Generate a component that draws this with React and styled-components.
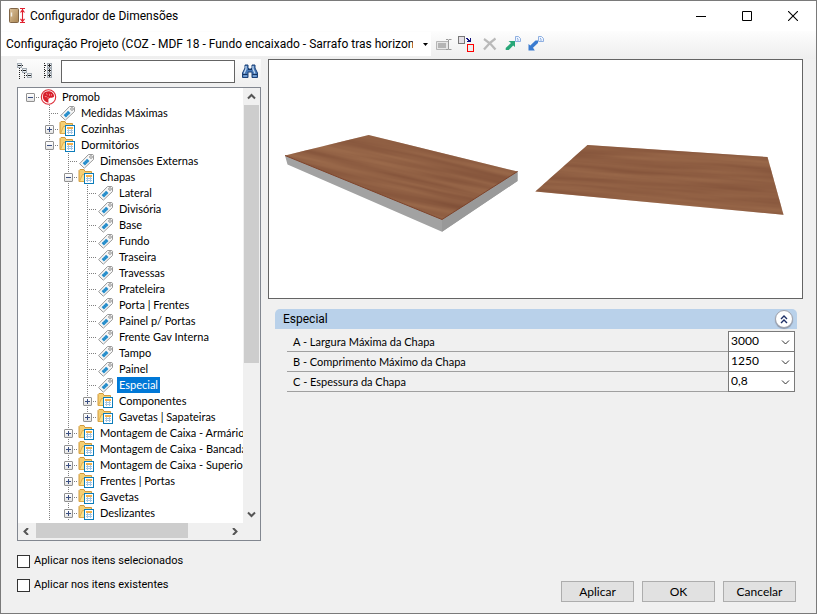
import React, { useState } from 'react';
import styled, { createGlobalStyle, css } from 'styled-components';

const UI_FONT = 'Roboto, "Liberation Sans", sans-serif';
const LIST_FONT = 'Lato, "Liberation Sans", sans-serif';
const FACE = '#f0f0f0';
const EDGE = '#646464';

const GlobalStyle = createGlobalStyle`
  * { box-sizing: border-box; }
  body {
    margin: 0;
    color: #000;
    font: 11px/16px ${UI_FONT};
  }
  button, input, select {
    font: inherit;
    color: inherit;
    margin: 0;
    padding: 0;
  }
  svg { display: block; flex: none; }
`;

const Window = styled.div`
  display: flex;
  flex-direction: column;
  min-height: 100vh;
  background: ${FACE};
  border: 1px solid #7a7a7a;
`;

const TitleBar = styled.header`
  display: flex;
  align-items: center;
  height: 30px;
  padding-left: 8px;
  background: #fff;
`;

const Title = styled.h1`
  flex: 1;
  margin: 0 0 0 4px;
  font: 12px/16px ${UI_FONT};
`;

const CaptionButton = styled.button`
  display: flex;
  align-items: center;
  justify-content: center;
  width: 46px;
  height: 28px;
  border: 0;
  background: none;
`;

const ToolBar = styled.div`
  display: flex;
  align-items: center;
  height: 28px;
  padding-bottom: 3px;
  background: linear-gradient(#fdfdfd, #eee);
`;

const Combo = styled.div`
  position: relative;
  width: 430px;
  min-width: 0;
  margin-right: 1px;
  background: #fff;

  svg {
    position: absolute;
    right: 3px;
    top: 11px;
    pointer-events: none;
  }
`;

const ComboSelect = styled.select`
  display: block;
  width: 412px;
  height: 24px;
  padding-left: 5px;
  appearance: none;
  border: 0;
  background: none;
  font: 12px/24px ${UI_FONT};
`;

const ToolButton = styled.button`
  display: flex;
  align-items: center;
  justify-content: center;
  width: 23px;
  height: 22px;
  border: 0;
  background: none;
`;

const Body = styled.main`
  flex: 1;
  display: flex;
  gap: 7px;
  padding: 0 13px 0 16px;
`;

const SidePanel = styled.div`
  display: flex;
  flex-direction: column;
  width: 244px;
  flex: none;
`;

const SearchBar = styled.div`
  display: flex;
  align-items: center;
  height: 24px;
  margin-bottom: 4px;
  background: linear-gradient(#fcfcfc, ${FACE});

  button:first-child {
    justify-content: flex-start;
    width: 20px;
  }
`;

const SearchInput = styled.input`
  flex: 1;
  min-width: 0;
  height: 23px;
  margin: 0 3px 0 1px;
  padding: 0 4px;
  border: 1px solid ${EDGE};
  background: #fff;
`;

const TreeBox = styled.div`
  flex: 1;
  display: grid;
  grid-template-columns: 1fr 17px;
  grid-template-rows: 1fr 17px;
  border: 1px solid #828790;
  background: #fff;
`;

const Tree = styled.ul`
  list-style: none;
  margin: 0;
  padding: 1px 0 1px 3px;
  overflow: hidden;
  font: 11px/16px ${LIST_FONT};
`;

const TreeRow = styled.li`
  display: flex;
  height: 16px;
  white-space: nowrap;
`;

const dotsDown = 'repeating-linear-gradient(#808080 0 1px, transparent 1px 2px)';
const dotsAcross = 'repeating-linear-gradient(90deg, #808080 0 1px, transparent 1px 2px)';

const Guide = styled.span`
  display: flex;
  align-items: center;
  justify-content: center;
  flex: none;
  width: 19px;
  background-repeat: no-repeat;
  ${({ $line }) => $line === 'pass' && css`
    background-image: ${dotsDown};
    background-size: 1px 16px;
    background-position: 9px 0;
  `}
  ${({ $line }) => $line === 'tee' && css`
    background-image: ${dotsDown}, ${dotsAcross};
    background-size: 1px 16px, 10px 1px;
    background-position: 9px 0, 9px 8px;
  `}
  ${({ $line }) => $line === 'end' && css`
    background-image: ${dotsDown}, ${dotsAcross};
    background-size: 1px 8px, 10px 1px;
    background-position: 9px 0, 9px 8px;
  `}
  ${({ $line }) => $line === 'root' && css`
    background-image: ${dotsAcross};
    background-size: 10px 1px;
    background-position: 9px 8px;
  `}
`;

const Expander = styled.button`
  width: 9px;
  height: 9px;
  margin-top: 1px;
  border: 1px solid #919191;
  border-radius: 1px;
  background: linear-gradient(#fff, #e4e4e4);
`;

const TreeLabel = styled.button`
  height: 16px;
  margin-left: 3px;
  padding: 0 2px;
  border: 0;
  line-height: 16px;
  background: ${({ $selected }) => ($selected ? '#0078d7' : 'none')};
  color: ${({ $selected }) => ($selected ? '#fff' : '#000')};
`;

const ScrollBar = styled.div`
  display: flex;
  flex-direction: ${({ $vertical }) => ($vertical ? 'column' : 'row')};
  background: ${FACE};
`;

const ScrollButton = styled.button`
  display: flex;
  align-items: center;
  justify-content: center;
  width: 17px;
  height: 17px;
  border: 0;
  background: none;
`;

const Thumb = styled.div`
  flex: ${({ $size }) => $size};
  margin: ${({ $vertical }) => ($vertical ? '0 1px' : '0 0 2px 1px')};
  background: #cdcdcd;
`;

const ThumbRest = styled.div`
  flex: ${({ $size }) => $size};
`;

const Checks = styled.div`
  display: flex;
  flex-direction: column;
  gap: 8px;
  padding: 12px 0 20px;
`;

const CheckLabel = styled.label`
  display: flex;
  align-items: center;
  gap: 4px;
`;

const CheckBox = styled.input`
  appearance: none;
  width: 13px;
  height: 13px;
  border: 1px solid #333;
  background: #fff;

  &:checked {
    background: #333;
    box-shadow: inset 0 0 0 2px #fff;
  }
`;

const MainPanel = styled.div`
  flex: 1;
  min-width: 0;
  display: flex;
  flex-direction: column;
`;

const Preview = styled.div`
  height: 240px;
  border: 1px solid ${EDGE};
  background: #fff;

  svg {
    width: 100%;
    height: 100%;
  }
`;

const Group = styled.section`
  margin: 10px 6px 0 7px;
`;

const GroupHeader = styled.div`
  display: flex;
  align-items: center;
  justify-content: space-between;
  height: 20px;
  padding: 0 4px 0 8px;
  border-radius: 5px 5px 0 0;
  background: #b9d1ea;
`;

const GroupTitle = styled.h2`
  margin: 0;
  font: 12px/16px ${UI_FONT};
`;

const CollapseButton = styled.button`
  display: flex;
  align-items: center;
  justify-content: center;
  width: 18px;
  height: 18px;
  border: 1px solid #a0a3ad;
  border-radius: 50%;
  background: #fff;
  box-shadow: 0 1px 1px #8b95a8;
`;

const Fields = styled.div`
  margin: 3px 2px 0 12px;
`;

const Field = styled.div`
  display: flex;
  align-items: flex-end;
  height: 20px;
`;

const FieldLabel = styled.label`
  flex: 1;
  height: 20px;
  padding-left: 6px;
  font: 11px/20px ${LIST_FONT};
  border-bottom: 1px solid #a0a0a0;
`;

const FieldCombo = styled.div`
  position: relative;
  width: 67px;
  height: 21px;
  border: 1px solid #7a7a7a;
  background: #fff;

  svg {
    position: absolute;
    right: 4px;
    top: 7px;
    pointer-events: none;
  }
`;

const FieldSelect = styled.select`
  display: block;
  width: 100%;
  height: 18px;
  padding-left: 2px;
  appearance: none;
  border: 0;
  background: none;
  font: 12px/16px ${LIST_FONT};
`;

const Footer = styled.footer`
  display: flex;
  justify-content: flex-end;
  gap: 8px;
  margin-top: auto;
  padding: 0 7px 11px 0;
`;

const PushButton = styled.button`
  width: 73px;
  height: 21px;
  border: 1px solid #adadad;
  background: #e1e1e1;
  font: 12px/16px ${LIST_FONT};
`;

const TREE = [
  [0, 'logo', 'Promob', 'open'],
  [1, 'tag', 'Medidas Máximas'],
  [1, 'folder', 'Cozinhas', 'closed'],
  [1, 'folder', 'Dormitórios', 'open'],
  [2, 'tag', 'Dimensões Externas'],
  [2, 'folder', 'Chapas', 'open'],
  [3, 'tag', 'Lateral'],
  [3, 'tag', 'Divisória'],
  [3, 'tag', 'Base'],
  [3, 'tag', 'Fundo'],
  [3, 'tag', 'Traseira'],
  [3, 'tag', 'Travessas'],
  [3, 'tag', 'Prateleira'],
  [3, 'tag', 'Porta | Frentes'],
  [3, 'tag', 'Painel p/ Portas'],
  [3, 'tag', 'Frente Gav Interna'],
  [3, 'tag', 'Tampo'],
  [3, 'tag', 'Painel'],
  [3, 'tag', 'Especial'],
  [3, 'folder', 'Componentes', 'closed'],
  [3, 'folder', 'Gavetas | Sapateiras', 'closed', 'last'],
  [2, 'folder', 'Montagem de Caixa - Armários', 'closed'],
  [2, 'folder', 'Montagem de Caixa - Bancada', 'closed'],
  [2, 'folder', 'Montagem de Caixa - Superior', 'closed'],
  [2, 'folder', 'Frentes | Portas', 'closed'],
  [2, 'folder', 'Gavetas', 'closed'],
  [2, 'folder', 'Deslizantes', 'closed'],
];

const FIELDS = [
  ['a', 'A - Largura Máxima da Chapa', '3000'],
  ['b', 'B - Comprimento Máximo da Chapa', '1250'],
  ['c', 'C - Espessura da Chapa', '0,8'],
];

const LogoIcon = () => (
  <svg width="17" height="16" viewBox="0 0 17 16">
    <circle cx="8.5" cy="8" r="7.2" fill="#fff" stroke="#dc2a35" strokeWidth="1.1" />
    <path d="M3.4 4.6C4.8 2.8 7 2 9.4 2.3c2.800.4 4.700 2.400 4.700 5.200-1.300 1.300-2.700 1.500-4 1.300L8.400 10v3.800C5.200 13.200 3 11 2.800 8z" fill="#d81f2c" />
    <path d="M6 4.500l1.500 1.200M4.800 7.500l2 .2M9.600 4.800v2M8 8v1.500M11.500 5.200v1.500" stroke="#f4979b" strokeWidth=".9" fill="none" />
  </svg>
);

const TagIcon = () => (
  <svg width="17" height="16" viewBox="0 0 17 16">
    <path d="M10.5 1.5h4.3l.7.8v4.2L6.3 15.2 1.6 10.7z" fill="#f6f6f6" stroke="#999" />
    <path d="M9.2 5.700l2.300 2.200-4.600 4.600-2.300-2.200z" fill="#2d96d3" />
    <path d="M8.300 6.700l2.200 2.100M6.900 8.100l2.200 2.100M5.500 9.500l2.200 2.100" stroke="#176da8" strokeWidth=".5" />
    <circle cx="13" cy="4" r="1.300" fill="#fff" stroke="#888" strokeWidth=".9" />
  </svg>
);

const FolderIcon = () => (
  <svg width="17" height="16" viewBox="0 0 17 16">
    <path d="M1 12.500V1.500l1-1h4l1 2h6.500v10z" fill="#f5cf73" stroke="#d29a3c" />
    <path d="M1.500 12.500l3-7H14v7z" fill="#fbe08e" stroke="#d9a444" strokeWidth=".8" />
    <path d="M6.500 4.500h9v10h-9z" fill="#fff" stroke="#0c7cba" shapeRendering="crispEdges" />
    <path d="M8 6h6v2H8z" fill="#f2b04a" />
    <path d="M8 9.500h6M8 11.500h6M9.500 8v5M12.500 8v5" stroke="#a5c6e3" shapeRendering="crispEdges" />
  </svg>
);

const NODE_ICONS = { logo: LogoIcon, tag: TagIcon, folder: FolderIcon };

const AppIcon = () => (
  <svg width="17" height="16" viewBox="0 0 17 16">
    <defs>
      <linearGradient id="door" x1="0" y1="0" x2="1" y2="1">
        <stop offset="0" stopColor="#dcc29c" />
        <stop offset="1" stopColor="#a98552" />
      </linearGradient>
    </defs>
    <rect x=".5" y=".5" width="9" height="14" rx="1" fill="url(#door)" stroke="#806546" />
    <path d="M2.5 4.5v4" stroke="#f4f1ea" strokeWidth="1.4" />
    <path d="M11 .5h5M11 14.5h5M13.5 1v13M11.5 4.5l2-2.7 2 2.7M11.5 10.8l2 2.7 2-2.7" stroke="#e0202e" strokeWidth="1.1" fill="none" />
  </svg>
);

const CollapseAllIcon = () => (
  <svg width="16" height="16" viewBox="0 0 16 16" shapeRendering="crispEdges">
    <path d="M2.5 5v11M7.5 10v6" stroke="#222" strokeDasharray="1 1" />
    <path d="M4 7.5h2M9 12.5h2M5 2.5h2" stroke="#222" strokeDasharray="1 1" />
    <path d="M.5.5h4v4h-4zM5.5 5.5h4v4h-4zM10.5 10.5h4v4h-4z" fill="#e9eff4" stroke="#a3abb3" />
    <path d="M1 2.5h3M6 7.5h3M11 12.5h3" stroke="#222" />
  </svg>
);

const ExpandAllIcon = () => (
  <svg width="9" height="16" viewBox="0 0 9 16" shapeRendering="crispEdges">
    <path d="M.5 0v16M5.5 0v16M1 2.5h3M1 7.5h3M1 12.5h3" stroke="#222" strokeDasharray="1 1" />
    <path d="M3.5.5h4v4h-4zM3.5 5.5h4v4h-4zM3.5 10.5h4v4h-4z" fill="#e9eff4" stroke="#a3abb3" />
    <path d="M4 2.5h3M4 7.5h3M4 12.5h3M5.5 1v3M5.5 6v3M5.5 11v3" stroke="#222" />
  </svg>
);

const BinocularsIcon = () => (
  <svg width="16" height="14" viewBox="0 0 16 14">
    <path d="M3 1h3v3l1 1h2l1-1V1h3v3l2.5 5v4.5H10V8H6v5.5H.5V9L3 4z" fill="#4779b8" stroke="#1c4278" />
    <path d="M4 2v3L2 9.5M11 2v3l2 4.5" stroke="#c7dcf3" strokeWidth="1.2" fill="none" />
    <path d="M1 10.5h4.5M10.5 10.5H15M6 5.5h4" stroke="#16345f" />
    <path d="M1.5 12H5M11 12h3.5" stroke="#9bbfe6" />
  </svg>
);

const RenameIcon = () => (
  <svg width="16" height="16" viewBox="0 0 16 16">
    <path d="M.5 5.5h12v8H.5z" fill="#e6e6e6" stroke="#b5b5b5" />
    <path d="M2 7h8v5H2z" fill="#b4b4b4" />
    <path d="M10 3.500h2l.5.500.5-.500h2.500M12.500 4v9M10 13.500h2l.5-.500.5.500h2.500" stroke="#999" fill="none" />
  </svg>
);

const ReplaceIcon = () => (
  <svg width="17" height="16" viewBox="0 0 17 16" shapeRendering="crispEdges">
    <path d="M.5.5h6v7h-6z" fill="#e4e0e6" stroke="#777" />
    <path d="M9.5 8.5h6v7h-6z" fill="#eee" stroke="#f00" />
    <path d="M8 2h2v1h1v1h1V2h1v4H9V5h1V4H9V3H8z" fill="#12127c" />
  </svg>
);

const DeleteIcon = () => (
  <svg width="16" height="14" viewBox="0 0 16 14">
    <path d="M2 2c4 2.5 8 6 11.5 10.5M13.5 1.5C9 4.5 5.5 8 2 12.5" stroke="#b9b9b9" strokeWidth="2.2" fill="none" />
  </svg>
);

const PageIcon = () => (
  <path d="M10.5.5h3l2 2v3h-5zM12 2.5h1M12 4h2" fill="#edf4ff" stroke="#83a7dd" strokeWidth=".9" />
);

const ExportIcon = () => (
  <svg width="16" height="16" viewBox="0 0 16 16">
    <PageIcon />
    <path d="M3.500 5H10v6L8.200 9.500 3.800 14H.700v-2L6 7z" fill="#28a778" />
  </svg>
);

const ImportIcon = () => (
  <svg width="16" height="16" viewBox="0 0 16 16">
    <PageIcon />
    <path d="M.5 8l1.800 1.500L7.500 4.500H10V7l-5 4.800 1.800 2.700H.5z" fill="#3a7bd0" />
  </svg>
);

const CHEVRONS = {
  up: 'M1 5.5L4.5 2 8 5.5',
  down: 'M1 1.5L4.5 5 8 1.5',
  left: 'M6 0L2.5 3.5 6 7',
  right: 'M3 0l3.5 3.5L3 7',
};

const Chevron = ({ dir, width = 2, color = '#555' }) => (
  <svg width="9" height="7" viewBox="0 0 9 7">
    <path d={CHEVRONS[dir]} stroke={color} strokeWidth={width} fill="none" />
  </svg>
);

const Boards = () => (
  <svg viewBox="0 0 533 238" role="img" aria-label="Chapa">
    <defs>
      <filter id="grain" x="0" y="0" width="100%" height="100%" colorInterpolationFilters="sRGB">
        <feTurbulence type="fractalNoise" baseFrequency="0.006 0.13" numOctaves="3" seed="7" />
        <feColorMatrix values="0 0 0 0 .49  0 0 0 0 .3  0 0 0 0 .21  1.4 0 0 0 -.3" />
      </filter>
      <clipPath id="thickTop"><path d="M16 95.5L99.7 75 248.5 111.5 173 159.5z" /></clipPath>
      <clipPath id="flatTop"><path d="M266.3 131.5L318.5 85 498.5 97l16 57.7z" /></clipPath>
    </defs>
    <path d="M16 95.5l2.5 9L173 171.700l75.500-50.700v-10L173 159z" fill="#a2a2a2" />
    <path d="M173 159l75.500-48v10L173 171.700z" fill="#999" />
    <g clipPath="url(#thickTop)">
      <path d="M0 60h260v110H0z" fill="#9a694a" />
      <g transform="rotate(12 130 115)">
        <rect x="-20" y="20" width="300" height="190" filter="url(#grain)" />
      </g>
    </g>
    <path d="M16 95.500L173 159.500l75.500-48" stroke="#7d432b" fill="none" />
    <g clipPath="url(#flatTop)">
      <path d="M260 70h270v100H260z" fill="#9a694a" />
      <g transform="rotate(4 390 120)">
        <rect x="250" y="50" width="280" height="130" filter="url(#grain)" />
      </g>
    </g>
  </svg>
);

const TreeNode = ({ node, selected, onSelect }) => {
  const [depth, kind, label, state, last] = node;
  const Icon = NODE_ICONS[kind];
  let line = 'tee';
  if (depth === 0) line = 'root';
  if (last) line = 'end';
  return (
    <TreeRow>
      {Array.from({ length: depth }, (_, i) => (
        <Guide key={i} $line={i > 0 ? 'pass' : 'none'} />
      ))}
      <Guide $line={line}>
        {state && (
          <Expander aria-label={label} aria-expanded={state === 'open'}>
            <svg width="7" height="7" viewBox="0 0 7 7" shapeRendering="crispEdges">
              <path d={state === 'open' ? 'M1 3.5h5' : 'M1 3.5h5M3.5 1v5'} stroke="#3b4f81" />
            </svg>
          </Expander>
        )}
      </Guide>
      <Icon />
      <TreeLabel $selected={selected} onClick={() => onSelect(label)}>{label}</TreeLabel>
    </TreeRow>
  );
};

export default function App() {
  const [selected, setSelected] = useState('Especial');

  return (
    <Window>
      <GlobalStyle />
      <TitleBar>
        <AppIcon />
        <Title>Configurador de Dimensões</Title>
        <CaptionButton aria-label="Minimizar">
          <svg width="10" height="10"><path d="M0 5.5h10" stroke="#000" /></svg>
        </CaptionButton>
        <CaptionButton aria-label="Maximizar">
          <svg width="10" height="10"><path d="M.5.5h9v9h-9z" fill="none" stroke="#000" /></svg>
        </CaptionButton>
        <CaptionButton aria-label="Fechar">
          <svg width="10" height="10"><path d="M0 0l10 10M10 0L0 10" stroke="#000" strokeWidth="1.1" /></svg>
        </CaptionButton>
      </TitleBar>

      <ToolBar>
        <Combo>
          <ComboSelect aria-label="Configuração">
            <option>Configuração Projeto (COZ - MDF 18 - Fundo encaixado - Sarrafo tras horizontal)</option>
          </ComboSelect>
          <svg width="5" height="3"><path d="M0 0h5L2.5 3z" /></svg>
        </Combo>
        <ToolButton aria-label="Renomear" disabled><RenameIcon /></ToolButton>
        <ToolButton aria-label="Substituir"><ReplaceIcon /></ToolButton>
        <ToolButton aria-label="Excluir" disabled><DeleteIcon /></ToolButton>
        <ToolButton aria-label="Exportar"><ExportIcon /></ToolButton>
        <ToolButton aria-label="Importar"><ImportIcon /></ToolButton>
      </ToolBar>

      <Body>
        <SidePanel>
          <SearchBar>
            <ToolButton aria-label="Recolher tudo"><CollapseAllIcon /></ToolButton>
            <ToolButton aria-label="Expandir tudo"><ExpandAllIcon /></ToolButton>
            <SearchInput type="text" aria-label="Pesquisar" />
            <ToolButton aria-label="Localizar"><BinocularsIcon /></ToolButton>
          </SearchBar>

          <TreeBox>
            <Tree>
              {TREE.map((node, i) => (
                <TreeNode key={i} node={node} selected={node[2] === selected} onSelect={setSelected} />
              ))}
            </Tree>
            <ScrollBar $vertical>
              <ScrollButton aria-label="Acima"><Chevron dir="up" /></ScrollButton>
              <Thumb $vertical $size={257} />
              <ThumbRest $size={143} />
              <ScrollButton aria-label="Abaixo"><Chevron dir="down" /></ScrollButton>
            </ScrollBar>
            <ScrollBar>
              <ScrollButton aria-label="Esquerda"><Chevron dir="left" /></ScrollButton>
              <Thumb $size={152} />
              <ThumbRest $size={38} />
              <ScrollButton aria-label="Direita"><Chevron dir="right" /></ScrollButton>
            </ScrollBar>
            <ScrollBar />
          </TreeBox>

          <Checks>
            <CheckLabel><CheckBox type="checkbox" />Aplicar nos itens selecionados</CheckLabel>
            <CheckLabel><CheckBox type="checkbox" />Aplicar nos itens existentes</CheckLabel>
          </Checks>
        </SidePanel>

        <MainPanel>
          <Preview><Boards /></Preview>
          <Group>
            <GroupHeader>
              <GroupTitle>Especial</GroupTitle>
              <CollapseButton aria-label="Recolher">
                <svg width="8" height="9" viewBox="0 0 8 9">
                  <path d="M1 4l3-3 3 3M1 8l3-3 3 3" stroke="#1e2f66" strokeWidth="1.4" fill="none" />
                </svg>
              </CollapseButton>
            </GroupHeader>
            <Fields>
              {FIELDS.map(([id, label, value]) => (
                <Field key={id}>
                  <FieldLabel htmlFor={id}>{label}</FieldLabel>
                  <FieldCombo>
                    <FieldSelect id={id}>
                      <option>{value}</option>
                    </FieldSelect>
                    <Chevron dir="down" width={1} color="#333" />
                  </FieldCombo>
                </Field>
              ))}
            </Fields>
          </Group>
          <Footer>
            <PushButton>Aplicar</PushButton>
            <PushButton>OK</PushButton>
            <PushButton>Cancelar</PushButton>
          </Footer>
        </MainPanel>
      </Body>
    </Window>
  );
}
